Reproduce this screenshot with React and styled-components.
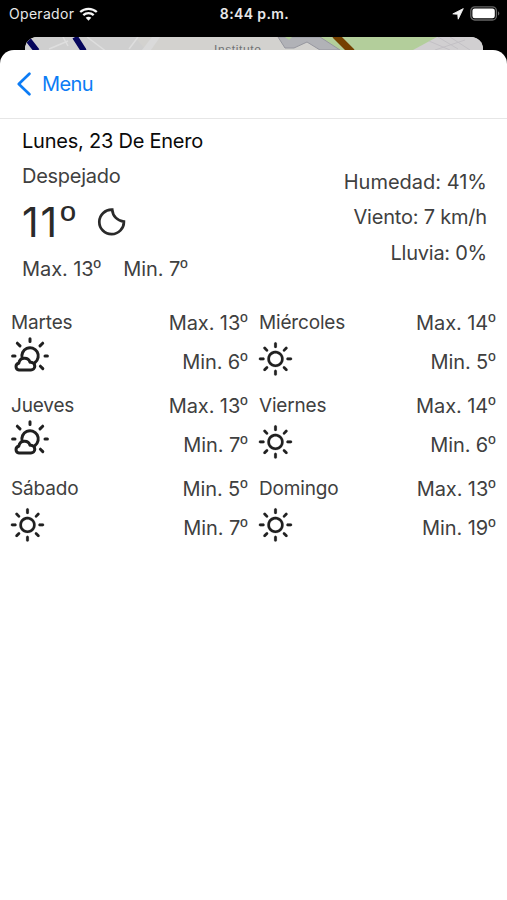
import React from "react";
import styled, { createGlobalStyle } from "styled-components";
import { WiDaySunny } from "react-icons/wi";

const GlobalStyle = createGlobalStyle`
  * { box-sizing: border-box; }
  body {
    margin: 0;
    background: #000;
    font-family: Inter, "Liberation Sans", sans-serif;
    overflow: hidden;
  }
`;

const Screen = styled.main`
  display: flex;
  flex-direction: column;
  width: 507px;
  height: 900px;
  background: #000;
`;

const StatusBar = styled.header`
  display: grid;
  grid-template-columns: 1fr auto 1fr;
  align-items: center;
  height: 27px;
  padding: 0 7px 0 9px;
  color: #e8e8e8;
`;

const Carrier = styled.div`
  display: flex;
  align-items: center;
  gap: 5px;
  font-size: 14px;
  letter-spacing: 0.3px;
`;

const Clock = styled.div`
  font-size: 14px;
  font-weight: 600;
  letter-spacing: 0.38px;
`;

const Indicators = styled.div`
  display: flex;
  justify-content: flex-end;
  align-items: center;
  gap: 6px;
`;

const MapPeek = styled.div`
  height: 22px;
  margin: 10px 24px -9px 25px;
  border-radius: 12px 12px 0 0;
  overflow: hidden;
`;

const MapArt = styled.svg`
  display: block;
`;

const Sheet = styled.section`
  flex: 1;
  position: relative;
  background: #fff;
  border-radius: 14px 14px 0 0;
`;

const NavBar = styled.nav`
  display: flex;
  align-items: center;
  height: 69px;
  padding: 0 17px;
  border-bottom: 1px solid #e6e6e6;
`;

const BackButton = styled.button`
  display: flex;
  align-items: center;
  gap: 11px;
  padding: 0;
  border: 0;
  background: none;
  color: #0c7cf5;
  font: 400 20px/24px Inter, sans-serif;
  letter-spacing: -0.6px;
`;

const Today = styled.section`
  display: flex;
  justify-content: space-between;
  height: 185px;
  padding: 5px 20px 0 22px;
`;

const Line = styled.div`
  font-size: 20px;
  line-height: ${(p) => p.$height || 34}px;
  letter-spacing: ${(p) => p.$track || 0}px;
  color: ${(p) => (p.$strong ? "#0a0a0a" : "#404040")};
  white-space: nowrap;
`;

const Current = styled.div`
  display: flex;
  align-items: center;
  height: 57px;
  color: #2a2a2a;
`;

const Temperature = styled.span`
  font-size: 41px;
  line-height: 57px;
  letter-spacing: 1.8px;
`;

const Ordinal = styled.span`
  margin-left: ${(p) => (p.$large ? 1.5 : 0)}px;
  font-family: "Liberation Sans", sans-serif;
  line-height: 0;
  letter-spacing: 0;
  vertical-align: ${(p) => (p.$large ? 3 : 1)}px;
`;

const MoonIcon = styled.svg`
  margin-left: 20.5px;
`;

const Range = styled.div`
  display: flex;
  gap: 22.5px;
`;

const Details = styled.div`
  padding-top: 41px;
  text-align: right;
`;

const Forecast = styled.section`
  display: grid;
  grid-template-columns: 237px 237px;
  column-gap: 11px;
  grid-auto-rows: 83px;
  padding: 0 11px;
`;

const Day = styled.article`
  display: flex;
  justify-content: space-between;
`;

const DayName = styled.h2`
  margin: 0;
  font-size: 19px;
  font-weight: 400;
  line-height: 37px;
  letter-spacing: -0.17px;
  color: #404040;
`;

const DayIcon = styled.div`
  display: flex;
  height: 40px;
  color: #202020;
`;

const SunIcon = styled(WiDaySunny)`
  width: 47px;
  height: 47px;
  margin: -5px 0 0 -7px;
  stroke: currentColor;
  stroke-width: 0.1px;
`;

const CloudySunIcon = styled.svg`
  margin-top: -4px;
`;

const Temps = styled.div`
  padding-right: 0.5px;
  text-align: right;
`;

const days = [
  { name: "Martes", overcast: true, top: "Max. 13", low: "Min. 6" },
  { name: "Miércoles", top: "Max. 14", low: "Min. 5" },
  { name: "Jueves", overcast: true, top: "Max. 13", low: "Min. 7" },
  { name: "Viernes", top: "Max. 14", low: "Min. 6" },
  { name: "Sábado", top: "Min. 5", low: "Min. 7" },
  { name: "Domingo", top: "Max. 13", low: "Min. 19" },
];

const Wifi = () => (
  <svg width="19" height="14" viewBox="0 0 19 14" fill="none" stroke="#f5f5f5" strokeWidth="2.3">
    <path d="M1.2 5C5.8.7 13.2.7 17.8 5" />
    <path d="M4.3 8.2c2.9-2.7 7.5-2.7 10.4 0" />
    <path d="M9.5 13.7 6.7 10.8c1.6-1.4 4-1.4 5.6 0Z" fill="#f5f5f5" stroke="none" />
  </svg>
);

const LocationArrow = () => (
  <svg width="12" height="12" viewBox="0 0 12 12" fill="#f5f5f5">
    <path d="M11.3.6.8 5.9l4.9.4.5 4.9Z" stroke="#f5f5f5" strokeWidth=".8" strokeLinejoin="round" />
  </svg>
);

const Battery = () => (
  <svg width="30" height="15" viewBox="0 0 30 15">
    <rect x=".8" y=".8" width="25.6" height="13.2" rx="4" fill="none" stroke="#666" strokeWidth="1.3" />
    <rect x="2.4" y="2.5" width="22.4" height="9.8" rx="2.3" fill="#fff" />
    <path d="M28 5.2c1.8.8 1.8 3.6 0 4.4Z" fill="#666" />
  </svg>
);

const Moon = () => (
  <MoonIcon width="30" height="30" viewBox="0 0 30 30" fill="none" stroke="currentColor" strokeWidth="2.7">
    <path d="M16.2 1.6A12.3 12.3 0 1 0 27.9 13.5C21.8 13 16.6 8.2 16.2 1.6Z" />
  </MoonIcon>
);

const CloudySun = () => (
  <CloudySunIcon width="38" height="36" viewBox="0 0 38 36" fill="none" stroke="currentColor" strokeWidth="3" strokeLinecap="round" strokeLinejoin="round">
    <path d="M8 33H19.8A3.9 3.9 0 0 0 20 25.2H19A5.8 5.8 0 0 0 7.8 26.2A3.45 3.45 0 0 0 8 33Z" />
    <path d="M11.2 21.3A8.2 8.2 0 1 1 24 25.5" />
    <path d="M19 1.8V4.4M6.3 6.2 9 8.9M31.7 6.2 29 8.9M1.6 19H4M34 19H36.4M29.4 29.2 31.8 31.6" />
  </CloudySunIcon>
);

const Degrees = ({ children, ...rest }) => (
  <Line $track={-0.08} {...rest}>{children}<Ordinal>º</Ordinal></Line>
);

const MapStrip = () => (
  <MapArt width="458" height="22" viewBox="0 0 458 22">
    <rect width="458" height="22" fill="#d3d2cf" />
    <path d="M0 0h110l18 22H0Z" fill="#cfcfcf" />
    <path d="M24 12 43 4M38 0l5 9M62 0l20 15M104 12 113 0M120 12 130 0" stroke="#dedede" strokeWidth="1.5" fill="none" />
    <path d="m117 13 10-13h8l-9 13Z" fill="#dadada" />
    <path d="M294 0h135q-24 5-33 22h-72Z" fill="#b3ce9b" />
    <path d="M253 0h42l20 13h-20l-13-8-13 6h-9Z" fill="#b1b2b7" stroke="#96979f" />
    <path d="M260 0h7l-3 3Z" fill="#b3ce9b" />
    <path d="M412 0h46v22h-70v-9Z" fill="#d1cfd1" />
    <path d="m404 4 21 9M413 0l20 12M425 0l20 13M410 13 440 3" stroke="#c3c1c5" fill="none" />
    <path d="M1 0 12 14M50 0l9 14" stroke="#06065c" strokeWidth="6" />
    <path d="m310-2 17 17" stroke="#754000" strokeWidth="7" />
    <text x="189" y="17" fill="#707274" fontSize="12" fontFamily="Liberation Sans, sans-serif" letterSpacing=".6">Instituto</text>
  </MapArt>
);

export default function App() {
  return (
    <>
      <GlobalStyle />
      <Screen>
        <StatusBar>
          <Carrier>Operador <Wifi /></Carrier>
          <Clock>8:44 p.m.</Clock>
          <Indicators><LocationArrow /><Battery /></Indicators>
        </StatusBar>
        <MapPeek><MapStrip /></MapPeek>
        <Sheet>
          <NavBar>
            <BackButton>
              <svg width="14" height="24" viewBox="0 0 14 24" fill="none" stroke="currentColor" strokeWidth="2.7" strokeLinecap="round" strokeLinejoin="round">
                <path d="M12.4 1.8 1.8 12l10.6 10.2" />
              </svg>
              Menu
            </BackButton>
          </NavBar>
          <Today>
            <div>
              <Line $strong $track={-0.23}>Lunes, 23 De Enero</Line>
              <Line $height={36} $track={-0.27}>Despejado</Line>
              <Current>
                <Temperature>11<Ordinal $large>º</Ordinal></Temperature>
                <Moon />
              </Current>
              <Range><Degrees $height={36}>Max. 13</Degrees><Degrees $height={36}>Min. 7</Degrees></Range>
            </div>
            <Details>
              <Line $height={35}>Humedad: 41%</Line>
              <Line $height={35} $track={-0.2}>Viento: 7 km/h</Line>
              <Line $height={37} $track={-0.25}>Lluvia: 0%</Line>
            </Details>
          </Today>
          <Forecast>
            {days.map((d) => (
              <Day key={d.name}>
                <div>
                  <DayName>{d.name}</DayName>
                  <DayIcon>{d.overcast ? <CloudySun /> : <SunIcon />}</DayIcon>
                </div>
                <Temps>
                  <Degrees $height={39}>{d.top}</Degrees>
                  <Degrees $height={39}>{d.low}</Degrees>
                </Temps>
              </Day>
            ))}
          </Forecast>
        </Sheet>
      </Screen>
    </>
  );
}
